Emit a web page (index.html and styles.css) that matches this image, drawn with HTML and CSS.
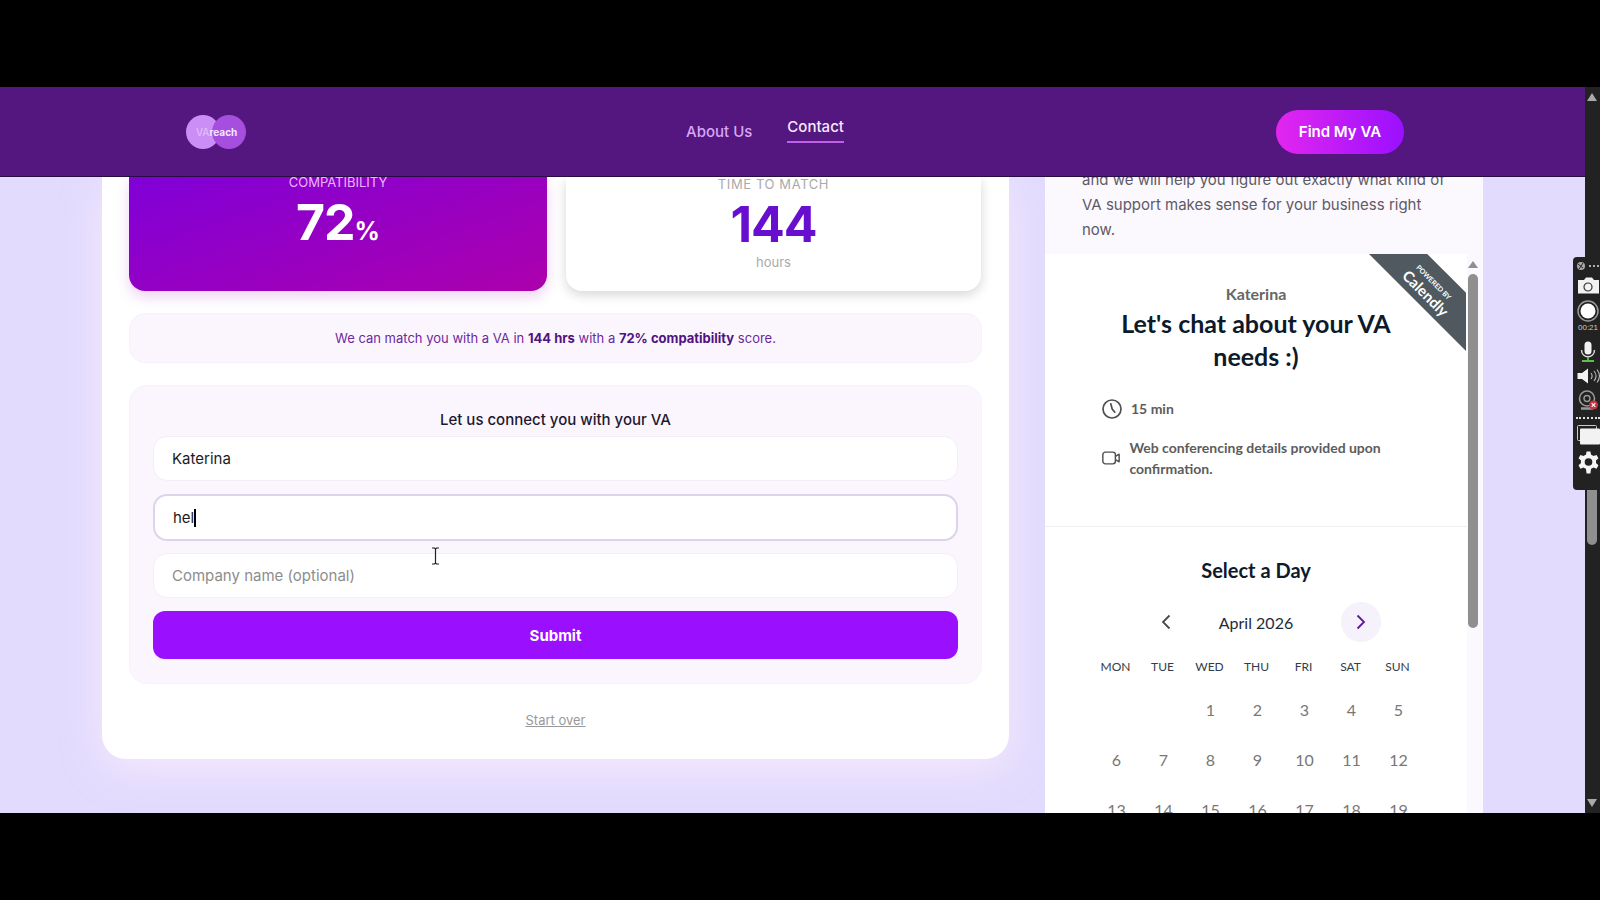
FILE: index.html
```html
<!DOCTYPE html>
<html lang="en">
<head>
  <meta charset="UTF-8" />
  <meta name="viewport" content="width=device-width, initial-scale=1.0"/>
  <title>VAreach - Contact</title>
  <link rel="stylesheet" href="styles.css">
</head>
<body>

  <div class="window">
    <div class="page">

      <!-- Nav -->
      <header class="nav">
        <a class="logo">
          <span class="logo-left"></span>
          <span class="logo-right"></span>
          <span class="logo-text"><span class="logo-va">VA</span>reach</span>
        </a>
        <nav class="nav-links">
          <a class="nav-link">About Us</a>
          <a class="nav-link active">Contact</a>
        </nav>
        <button class="find-btn">Find My VA</button>
      </header>

      <main class="content">

        <!-- Result card -->
        <section class="result-card">
          <div class="stats">
            <div class="stat stat-compat">
              <div class="stat-label">COMPATIBILITY</div>
              <div class="stat-value">72<span class="stat-unit">%</span></div>
            </div>
            <div class="stat stat-time">
              <div class="stat-label">TIME TO MATCH</div>
              <div class="stat-value">144</div>
              <div class="stat-sub">hours</div>
            </div>
          </div>

          <p class="summary">We can match you with a VA in <b>144 hrs</b> with a <b>72% compatibility</b> score.</p>

          <form class="connect">
            <h3>Let us connect you with your VA</h3>
            <input class="field" type="text" value="Katerina">
            <div class="field focused">hel<span class="caret"></span></div>
            <input class="field" type="text" placeholder="Company name (optional)">
            <button class="submit" type="button">Submit</button>
          </form>

          <a class="start-over">Start over</a>
        </section>

        <!-- Booking column -->
        <aside class="booking">
          <div class="intro">
            <p>and we will help you figure out exactly what kind of VA support makes sense for your business right now.</p>
          </div>

          <div class="calendly">
            <div class="ribbon">
              <span class="ribbon-small">POWERED BY</span>
              <span class="ribbon-big">Calendly</span>
            </div>

            <div class="cal-scroll">
              <span class="cal-arrow"></span>
              <span class="cal-thumb"></span>
            </div>

            <div class="event">
              <div class="host">Katerina</div>
              <h2>Let's chat about your VA needs :)</h2>
              <div class="detail detail-time">
                <svg viewBox="0 0 20 20" width="20" height="20" fill="none" stroke="#4f4f4f" stroke-width="1.7" stroke-linecap="round"><circle cx="10" cy="10" r="9"/><path d="M8.8 4.8 L10.2 10 L12.8 13.2"/></svg>
                <span>15 min</span>
              </div>
              <div class="detail">
                <svg viewBox="0 0 22 18" width="22" height="18" fill="none" stroke="#4f4f4f" stroke-width="1.7" stroke-linejoin="round"><rect x="1" y="2" width="15" height="14" rx="3"/><path d="M16 7 L20.5 4.5 V13.5 L16 11"/></svg>
                <span>Web conferencing details provided upon confirmation.</span>
              </div>
            </div>

            <div class="picker">
              <h4>Select a Day</h4>
              <div class="month">
                <svg class="chev" viewBox="0 0 10 16" width="10" height="16" fill="none" stroke="#4a4a4a" stroke-width="1.8"><path d="M8.5 1.5 L2 8 L8.5 14.5"/></svg>
                <span class="month-name">April 2026</span>
                <span class="next">
                  <svg viewBox="0 0 10 16" width="10" height="16" fill="none" stroke="#5b1a9c" stroke-width="1.8"><path d="M1.5 1.5 L8 8 L1.5 14.5"/></svg>
                </span>
              </div>
              <div class="week">
                <span>MON</span><span>TUE</span><span>WED</span><span>THU</span><span>FRI</span><span>SAT</span><span>SUN</span>
              </div>
              <div class="days">
                <span></span><span></span><span>1</span><span>2</span><span>3</span><span>4</span><span>5</span>
                <span>6</span><span>7</span><span>8</span><span>9</span><span>10</span><span>11</span><span>12</span>
                <span>13</span><span>14</span><span>15</span><span>16</span><span>17</span><span>18</span><span>19</span>
              </div>
            </div>
          </div>
        </aside>

      </main>
    </div>

    <!-- Browser scrollbar -->
    <div class="browser-bar">
      <span class="bar-up"></span>
      <span class="bar-thumb"></span>
      <span class="bar-down"></span>
    </div>

    <!-- Mouse cursor -->
    <svg class="ibeam" viewBox="0 0 9 18" width="9" height="18" fill="none" stroke="#222" stroke-width="1.2"><path d="M1 1 H3.5 L4.5 2 L5.5 1 H8 M4.5 2 V16 M1 17 H3.5 L4.5 16 L5.5 17 H8"/></svg>

    <!-- Recorder toolbar -->
    <div class="recorder">
      <svg viewBox="0 0 24 10" width="24" height="10"><circle cx="5" cy="5" r="4" fill="#aaa"/><path d="M2 3 L7 7 M7 2 L3 8" stroke="#222" stroke-width="1"/><circle cx="14" cy="5" r="1" fill="#ddd"/><circle cx="18" cy="5" r="1" fill="#ddd"/><circle cx="22" cy="5" r="1" fill="#ddd"/></svg>
      <svg viewBox="0 0 23 17" width="23" height="17"><path d="M1 3 H7 L9 0.5 H15 L17 3 H22 V16.5 H1 Z" fill="#f2f2f2"/><circle cx="11" cy="10" r="4" fill="none" stroke="#333" stroke-width="1.2"/></svg>
      <svg viewBox="0 0 22 22" width="22" height="22"><circle cx="11" cy="11" r="10" fill="none" stroke="#999" stroke-width="1.5"/><circle cx="11" cy="11" r="7.5" fill="#fff"/></svg>
      <span class="rec-time">00:21</span>
      <svg viewBox="0 0 16 21" width="16" height="21" fill="none"><rect x="4.5" y="0.5" width="7" height="13" rx="3.5" fill="#f2f2f2"/><path d="M1.5 9 C1.5 18 14.5 18 14.5 9" stroke="#ddd" stroke-width="1.4"/><path d="M8 16 V19 M2 20 H14" stroke="#5cc04a" stroke-width="1.8"/></svg>
      <svg viewBox="0 0 23 16" width="23" height="16" fill="none"><path d="M0.5 5 H5 L11 0.5 V15.5 L5 11 H0.5 Z" fill="#f2f2f2"/><path d="M14 5 C15.5 7 15.5 9 14 11 M17 3 C19.5 6 19.5 10 17 13 M20 1.5 C23 5.5 23 10.5 20 14.5" stroke="#bbb" stroke-width="1.1"/></svg>
      <svg viewBox="0 0 21 21" width="21" height="21" fill="none"><circle cx="9" cy="8.5" r="7.5" stroke="#999" stroke-width="1.6"/><circle cx="9" cy="8.5" r="3" stroke="#999" stroke-width="1.4"/><path d="M3 18.5 H15" stroke="#999" stroke-width="2.5"/><circle cx="15.5" cy="15" r="4.5" fill="#c8343e"/><path d="M13.7 13.2 L17.3 16.8 M17.3 13.2 L13.7 16.8" stroke="#fff" stroke-width="1.2"/></svg>
      <span class="rec-line"></span>
      <svg viewBox="0 0 23 20" width="23" height="20"><rect x="0.5" y="0.5" width="19" height="15" rx="1" fill="none" stroke="#ccc"/><rect x="3" y="3.5" width="20" height="16" rx="1" fill="#f2f2f2"/></svg>
      <svg viewBox="0 0 24 24" width="23" height="23"><path fill="#f5f5f5" fill-rule="evenodd" d="M10 0.5 H14 L14.7 3.9 C15.6 4.2 16.4 4.7 17.1 5.2 L20.4 4.1 L22.4 7.6 L19.8 9.9 C20 10.8 20 11.7 19.8 12.6 L22.4 14.9 L20.4 18.4 L17.1 17.3 C16.4 17.9 15.6 18.3 14.7 18.6 L14 23.5 H10 L9.3 18.6 C8.4 18.3 7.6 17.9 6.9 17.3 L3.6 18.4 L1.6 14.9 L4.2 12.6 C4 11.7 4 10.8 4.2 9.9 L1.6 7.6 L3.6 4.1 L6.9 5.2 C7.6 4.7 8.4 4.2 9.3 3.9 Z M12 7.5 A4 4 0 1 0 12 15.5 A4 4 0 1 0 12 7.5 Z"/></svg>
    </div>
  </div>

</body>
</html>
```

FILE: styles.css
```css
* {
  box-sizing: border-box;
}

body {
  margin: 0;
  height: 900px;
  padding-top: 87px;
  background: #000;
  font-family: Inter, 'Liberation Sans', sans-serif;
  overflow: hidden;
}

h2, h3, h4, p {
  margin: 0;
}

.window {
  position: relative;
  display: flex;
  height: 726px;
  background: #e2dbfd;
  overflow: hidden;
}

.page {
  flex: 1;
  display: flex;
  flex-direction: column;
  min-width: 0;
}

/* Nav */
.nav {
  position: relative;
  z-index: 2;
  flex: none;
  height: 90px;
  padding: 0 181px 0 186px;
  display: flex;
  justify-content: space-between;
  align-items: center;
  background: #54167f;
  border-bottom: 1px solid #2a0c44;
}

.logo {
  position: relative;
  display: block;
  width: 68px;
  height: 34px;
}

.logo-left, .logo-right {
  position: absolute;
  top: 0;
  width: 34px;
  height: 34px;
  border-radius: 50%;
}

.logo-left {
  left: 0;
  background: #cb8df6;
}

.logo-right {
  left: 26px;
  background: #a64fdf;
}

.logo-text {
  position: absolute;
  left: 10px;
  top: 10px;
  font-size: 10px;
  line-height: 14px;
  font-weight: 700;
  color: #f4e6ff;
  white-space: nowrap;
}

.logo-va {
  color: #e2bdfa;
  font-weight: 500;
}

.nav-links {
  display: flex;
  gap: 35px;
  align-items: center;
}

.nav-link {
  font-size: 15px;
  font-weight: 500;
  color: #d9a6f7;
}

.nav-link.active {
  color: #f6eaff;
  padding-bottom: 5px;
  border-bottom: 2px solid #c060e8;
  margin-bottom: 3px;
}

.find-btn {
  width: 128px;
  height: 44px;
  border: none;
  border-radius: 22px;
  background: linear-gradient(90deg, #e326ef, #9a10ff);
  color: #fff;
  font: 600 15px Inter, sans-serif;
}

/* Main */
.content {
  flex: 1;
  min-height: 0;
  padding-left: 102px;
  display: flex;
  gap: 36px;
  align-items: flex-start;
}

.result-card {
  flex: none;
  width: 907px;
  height: 582px;
  padding: 0 27px;
  display: flex;
  flex-direction: column;
  background: #fff;
  border-radius: 0 0 24px 24px;
  box-shadow: 0 10px 40px rgba(255, 240, 255, 0.7);
}

.stats {
  display: grid;
  grid-template-columns: 418px 415px;
  gap: 19px;
  height: 114px;
  flex: none;
}

.stat {
  text-align: center;
  border-radius: 0 0 16px 16px;
}

.stat-label {
  font-size: 13px;
  line-height: 18px;
}

.stat-value {
  font-weight: 700;
  font-size: 50px;
  line-height: 56px;
  letter-spacing: -1px;
}

.stat-compat {
  background: linear-gradient(160deg, #8000d8, #ad00ad);
  color: #fff;
  box-shadow: 0 6px 14px rgba(160, 0, 190, 0.18);
}

.stat-compat .stat-label {
  margin-top: -4px;
  color: #ebb6f8;
}

.stat-compat .stat-value {
  margin-top: 3px;
}

.stat-unit {
  font-size: 25px;
  letter-spacing: 0;
}

.stat-time {
  background: #fff;
  box-shadow: 0 4px 12px rgba(0, 0, 0, 0.16);
}

.stat-time .stat-label {
  margin-top: -2px;
  color: #aaa;
  letter-spacing: 0.6px;
}

.stat-time .stat-value {
  margin-top: 3px;
  color: #680ecf;
}

.stat-sub {
  margin-top: 1px;
  font-size: 13px;
  line-height: 18px;
  color: #aaa;
}

.summary {
  flex: none;
  width: 853px;
  margin-top: 22px;
  height: 50px;
  line-height: 48px;
  text-align: center;
  font-size: 13px;
  color: #6b2a9c;
  background: #fbf6fe;
  border: 1px solid #f7f1fc;
  border-radius: 16px;
}

.summary b {
  color: #4f1480;
  font-weight: 700;
}

.connect {
  flex: none;
  width: 853px;
  height: 299px;
  margin-top: 22px;
  padding: 23px 23px 0;
  display: flex;
  flex-direction: column;
  background: #fbf6fe;
  border-radius: 18px;
  border: 1px solid #f7f1fc;
}

.connect h3 {
  font-size: 15px;
  line-height: 22px;
  font-weight: 500;
  text-align: center;
  color: #1e1830;
  margin-bottom: 5px;
}

.field {
  display: block;
  width: 100%;
  height: 45px;
  flex: none;
  padding: 0 18px;
  margin-bottom: 13px;
  background: #fff;
  border: 1px solid #f3edf8;
  border-radius: 14px;
  font: 400 15px Inter, sans-serif;
  line-height: 43px;
  color: #1c1c1c;
  outline: none;
}

.field::placeholder {
  color: #8d8d8d;
}

.field.focused {
  height: 47px;
  line-height: 43px;
  border: 2px solid #dcd3ee;
  margin-bottom: 12px;
}

.caret {
  display: inline-block;
  width: 2px;
  height: 18px;
  background: #000;
  vertical-align: -4px;
}

.submit {
  flex: none;
  height: 48px;
  border: none;
  border-radius: 12px;
  background: #9b0fff;
  color: #fff;
  font: 700 15px Inter, sans-serif;
}

.start-over {
  margin-top: 28px;
  text-align: center;
  font-size: 13px;
  line-height: 16px;
  color: #999;
  text-decoration: underline;
}

/* Right column */
.booking {
  flex: none;
  width: 438px;
  height: 100%;
  overflow: hidden;
  background: #fbf8fe;
}

.intro {
  height: 87px;
  padding: 0 36px 0 37px;
}

.intro p {
  margin-top: -10px;
  font-size: 15px;
  line-height: 25px;
  color: #5f5a66;
}

.calendly {
  position: relative;
  width: 422px;
  height: 640px;
  background: #fff;
  font-family: Lato, 'Open Sans', sans-serif;
}

.ribbon {
  position: absolute;
  right: 1px;
  top: 0;
  width: 97px;
  height: 97px;
  overflow: hidden;
  background: #505960;
  clip-path: polygon(0 0, 60% 0, 100% 40%, 100% 100%);
  color: #fff;
}

.ribbon-small, .ribbon-big {
  position: absolute;
  white-space: nowrap;
  text-align: center;
  transform: rotate(45deg);
}

.ribbon-small {
  left: 35px;
  top: 23px;
  width: 60px;
  font-size: 7px;
  font-weight: 700;
  line-height: 10px;
}

.ribbon-big {
  left: 17px;
  top: 30px;
  width: 80px;
  font-size: 15px;
  font-weight: 700;
  line-height: 18px;
}

.cal-scroll {
  position: absolute;
  left: 423px;
  top: 0;
  width: 10px;
}

.cal-arrow {
  position: absolute;
  top: 7px;
  left: 0;
  border-left: 5px solid transparent;
  border-right: 5px solid transparent;
  border-bottom: 7px solid #8f8f8f;
}

.cal-thumb {
  position: absolute;
  top: 20px;
  left: 0;
  width: 10px;
  height: 354px;
  border-radius: 5px;
  background: #8f8f8f;
}

.event {
  height: 273px;
  padding-top: 30px;
  border-bottom: 1px solid #efefef;
  text-align: center;
}

.host {
  font-size: 16px;
  line-height: 20px;
  font-weight: 700;
  color: #666;
}

.event h2 {
  width: 340px;
  margin: 3px auto 25px;
  font-size: 25px;
  line-height: 33px;
  font-weight: 700;
  color: #0c1a2b;
}

.detail {
  display: flex;
  align-items: center;
  gap: 9px;
  margin-left: 57px;
  width: 310px;
  text-align: left;
  font-size: 14px;
  line-height: 21px;
  font-weight: 700;
  color: #5c5c5c;
}

.detail-time {
  margin-bottom: 18px;
}

.picker {
  padding-top: 30px;
}

.picker h4 {
  font-size: 20px;
  line-height: 26px;
  font-weight: 700;
  text-align: center;
  color: #0c1a2b;
}

.month {
  display: flex;
  align-items: center;
  justify-content: center;
  height: 40px;
  margin-top: 19px;
  font-size: 16px;
  color: #222c38;
}

.month-name {
  width: 170px;
  text-align: center;
}

.chev {
  margin-right: 0;
}

.next {
  display: flex;
  align-items: center;
  justify-content: center;
  width: 40px;
  height: 40px;
  margin-right: -30px;
  border-radius: 50%;
  background: #f5f2fb;
}

.week, .days {
  display: grid;
  grid-template-columns: repeat(7, 47px);
  margin-left: 47px;
  text-align: center;
}

.week {
  margin-top: 16px;
  font-size: 12px;
  line-height: 18px;
  color: #333d4a;
}

.days {
  margin-top: 9px;
  grid-auto-rows: 50px;
  font-size: 16px;
  line-height: 50px;
  color: #777;
}

.days span {
  padding-left: 2px;
}

/* Browser scrollbar */
.browser-bar {
  position: relative;
  flex: none;
  width: 15px;
  background: #222;
}

.bar-up, .bar-down {
  position: absolute;
  left: 2px;
  border-left: 5.5px solid transparent;
  border-right: 5.5px solid transparent;
}

.bar-up {
  top: 6px;
  border-bottom: 8px solid #aaa;
}

.bar-down {
  bottom: 6px;
  border-top: 8px solid #aaa;
}

.bar-thumb {
  position: absolute;
  left: 2px;
  top: 390px;
  width: 10px;
  height: 68px;
  border-radius: 5px;
  background: #8f8f8f;
}

.ibeam {
  position: absolute;
  left: 431px;
  top: 460px;
}

/* Recorder toolbar */
.recorder {
  position: absolute;
  left: 1573px;
  top: 170px;
  width: 27px;
  height: 233px;
  padding: 4px 0 0 3px;
  display: flex;
  flex-direction: column;
  align-items: center;
  background: #222;
  border-radius: 4px 0 0 4px;
}

.recorder svg {
  flex: none;
  margin-bottom: 6px;
}

.rec-time {
  margin: -5px 0 8px;
  font: 8px/10px 'Liberation Sans', sans-serif;
  color: #ccc;
}

.rec-line {
  flex: none;
  width: 24px;
  height: 0;
  margin: 0 0 6px;
  border-top: 2px dotted #ddd;
}
```
